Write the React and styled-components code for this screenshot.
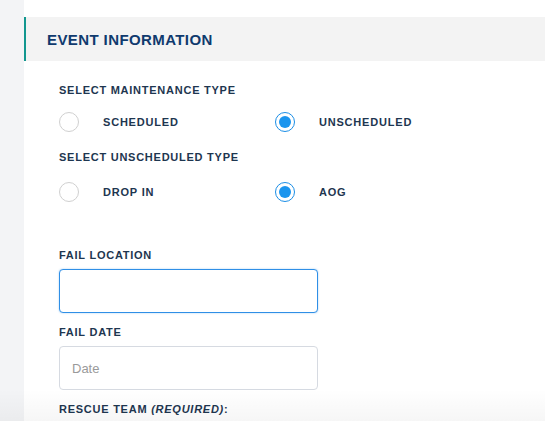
import React from 'react'
import styled, { createGlobalStyle } from 'styled-components'

const GlobalStyle = createGlobalStyle`
  html, body {
    margin: 0;
    padding: 0;
    background: #fff;
    font-family: 'Liberation Sans', Arial, sans-serif;
  }
`

const Page = styled.div`
  display: flex;
  min-height: 421px;
  position: relative;
  overflow: hidden;
`

const Sidebar = styled.div`
  width: 24px;
  flex: none;
  background: #f3f4f6;
`

const Main = styled.div`
  flex: 1;
  padding-top: 17px;
  background: #fff;
`

const SectionHeader = styled.div`
  height: 44px;
  display: flex;
  align-items: center;
  padding-left: 21px;
  background: #f3f3f3;
  border-left: 2px solid #12978f;
  color: #0f3a6e;
  font-size: 15px;
  font-weight: bold;
  letter-spacing: 0.4px;
`

const Form = styled.div`
  padding: 23px 0 0 35px;
`

const Label = styled.div`
  color: #1e3650;
  font-size: 11px;
  font-weight: bold;
  letter-spacing: 0.75px;
  line-height: 13px;
  margin-top: ${p => p.$top || 0}px;

  em {
    font-style: italic;
  }
`

const RadioRow = styled.div`
  display: grid;
  grid-template-columns: 216px 216px;
  margin-top: ${p => p.$top || 0}px;
`

const RadioOption = styled.label`
  display: flex;
  align-items: center;
  gap: 24px;
  color: #1e3650;
  font-size: 11px;
  font-weight: bold;
  letter-spacing: 0.8px;
`

const RadioCircle = styled.span`
  width: 20px;
  height: 20px;
  box-sizing: border-box;
  border-radius: 50%;
  border: 1px solid ${p => (p.$checked ? '#1b8ee6' : '#d0d0d0')};
  background: #fff;
  display: flex;
  align-items: center;
  justify-content: center;

  &::after {
    content: '';
    display: ${p => (p.$checked ? 'block' : 'none')};
    width: 12px;
    height: 12px;
    border-radius: 50%;
    background: #1b95ee;
  }
`

const Input = styled.input`
  display: block;
  box-sizing: border-box;
  width: 259px;
  height: 44px;
  margin-top: ${p => p.$top || 0}px;
  padding: 0 12px;
  border-radius: 4px;
  border: 1px solid ${p => (p.$focused ? '#2f8fe6' : '#d6dae1')};
  box-shadow: ${p => (p.$focused ? '0 0 2px rgba(47,143,230,0.45)' : 'none')};
  font-family: 'Liberation Sans', Arial, sans-serif;
  font-size: 13px;
  color: #333;
  outline: none;

  &::placeholder {
    color: #9a9a9a;
  }
`

const BottomFade = styled.div`
  position: absolute;
  left: 0;
  right: 0;
  bottom: 0;
  height: 32px;
  pointer-events: none;
  background: linear-gradient(to bottom, rgba(0,0,0,0), rgba(0,0,0,0.035));
`

const Radio = ({ checked, label }) => (
  <RadioOption>
    <RadioCircle $checked={checked} />
    {label}
  </RadioOption>
)

export default function App() {
  return (
    <Page>
      <GlobalStyle />
      <Sidebar />
      <Main>
        <SectionHeader>EVENT INFORMATION</SectionHeader>
        <Form>
          <Label>SELECT MAINTENANCE TYPE</Label>
          <RadioRow $top={15}>
            <Radio label="SCHEDULED" />
            <Radio label="UNSCHEDULED" checked />
          </RadioRow>
          <Label $top={19}>SELECT UNSCHEDULED TYPE</Label>
          <RadioRow $top={18}>
            <Radio label="DROP IN" />
            <Radio label="AOG" checked />
          </RadioRow>
          <Label $top={47}>FAIL LOCATION</Label>
          <Input $top={7} $focused />
          <Label $top={13}>FAIL DATE</Label>
          <Input $top={7} placeholder="Date" />
          <Label $top={13}>RESCUE TEAM <em>(REQUIRED)</em>:</Label>
        </Form>
      </Main>
      <BottomFade />
    </Page>
  )
}
